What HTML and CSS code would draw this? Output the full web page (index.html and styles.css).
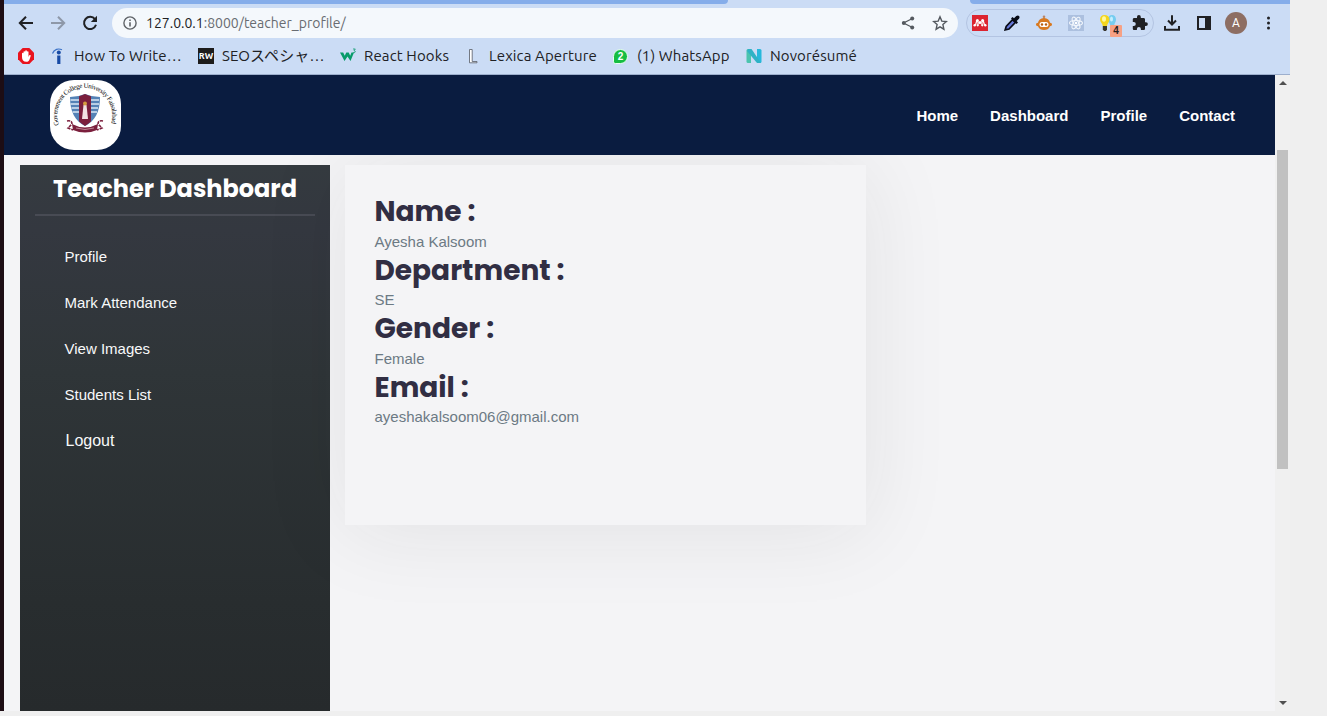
FILE: index.html
```html
<!DOCTYPE html>
<html lang="en">
<head>
<meta charset="utf-8">
<title>Teacher Profile</title>
<link rel="stylesheet" href="styles.css">
</head>
<body>
<div class="window">
  <div class="tabstrip"><div class="tab-left"></div><div class="tab-right"></div></div>
  <div class="toolbar">
    <div class="nav-buttons">
      <svg class="ic" viewBox="0 0 16 16"><path d="M15 8H2.500M8 1.800 1.800 8 8 14.200" fill="none" stroke="#202124" stroke-width="2"/></svg>
      <svg class="ic" viewBox="0 0 16 16"><path d="M1 8h12.500M8 1.800 14.200 8 8 14.200" fill="none" stroke="#8e98a8" stroke-width="2"/></svg>
      <svg class="ic" viewBox="0 0 16 16"><path d="M13 4.200A6.100 6.100 0 1 0 14 9.800" fill="none" stroke="#202124" stroke-width="2"/><path d="M15 .8V7H8.800z" fill="#202124"/></svg>
    </div>
    <div class="omnibox">
      <svg class="info" viewBox="0 0 14 14"><circle cx="7" cy="7" r="6.100" fill="none" stroke="#5f6368" stroke-width="1.400"/><path d="M7 6.200v4.200M7 3.400v1.600" stroke="#5f6368" stroke-width="1.600"/></svg>
      <span class="url"><b>127.0.0.1</b>:8000/teacher_profile/</span>
      <svg class="ic share" viewBox="0 0 16 16"><path d="M12.500 3.500 3.500 8l9 4.500" fill="none" stroke="#54595f" stroke-width="1.300"/><g fill="#54595f"><circle cx="12.200" cy="3.500" r="2"/><circle cx="3.800" cy="8" r="2"/><circle cx="12.200" cy="12.500" r="2"/></g></svg>
      <svg class="ic star" viewBox="0 0 16 16"><path d="m8 1.800 1.800 4.300 4.600.4-3.500 3.100 1 4.600L8 11.800l-3.900 2.400 1-4.600L1.600 6.500l4.600-.4z" fill="none" stroke="#54595f" stroke-width="1.400"/></svg>
    </div>
    <div class="extensions">
      <svg class="ic" viewBox="0 0 16 16"><path fill="#dc2430" d="M0 0h16v16H0z"/><g fill="#fff"><circle cx="5.400" cy="5.500" r="1.500"/><circle cx="10.600" cy="5.500" r="1.500"/><circle cx="8" cy="7.500" r="1.500"/><circle cx="2.700" cy="10.300" r="1.200"/><circle cx="5.700" cy="10.300" r="1.100"/><circle cx="10.300" cy="10.300" r="1.100"/><circle cx="13.300" cy="10.300" r="1.200"/></g><path d="M4.700 6 3.500 10M11.300 6l1.200 4M6 6.500v4M10 6.500v4" fill="none" stroke="#fff" stroke-width="1.200"/></svg>
      <svg class="ic" viewBox="0 0 16 16"><path d="m1.200 14.800 1-3.300L8.500 4.700l2.800 2.800L5 14z" fill="#6678d8" stroke="#080b16" stroke-width="1.700"/><path d="m7 3.500 5.500 5.500 1.500-1.500-1.300-1.500L15 3.700C16.500 1.500 14.500-.5 12.300 1L10 3.300 8.500 2z" fill="#080b16"/></svg>
      <svg class="ic" viewBox="0 0 16 16"><circle cx="8" cy="1.800" r="1.300" fill="#b98668"/><path d="M7.300 2h1.400v3H7.300z" fill="#c88e5c"/><path d="M8 3c3.600 0 5.600 2.200 6 4.800 1.200 0 2 .7 2 1.700s-.8 1.700-2 1.700C13 14 10.700 15 8 15s-5-1-6-3.800c-1.200 0-2-.7-2-1.700s.8-1.700 2-1.700C2.400 5.200 4.400 3 8 3z" fill="#d87920"/><rect x="3.500" y="7" width="9" height="5" rx="2.500" fill="#fff"/><circle cx="6" cy="9.500" r="1.200" fill="#b85d10"/><circle cx="10" cy="9.500" r="1.200" fill="#b85d10"/></svg>
      <svg class="ic" viewBox="0 0 16 16"><path fill="#acc0df" d="M0 0h16v16H0z"/><g fill="none" stroke="#f2f6fc" stroke-width="1.100"><ellipse cx="8" cy="8" rx="6.500" ry="2.500"/><ellipse cx="8" cy="8" rx="6.500" ry="2.500" transform="rotate(60 8 8)"/><ellipse cx="8" cy="8" rx="6.500" ry="2.500" transform="rotate(120 8 8)"/></g><circle cx="8" cy="8" r="1.300" fill="#fff"/></svg>
      <span class="bulb">
        <svg class="ic" viewBox="0 0 16 16"><path d="M12 0c2.500 0 4 2 4 4.500S14.500 8 14 11h-3.500C10 8 8 7 8 4.500S9.500 0 12 0z" fill="#76cdf0"/><ellipse cx="11.500" cy="4" rx="1.500" ry="2.500" fill="#c4efff"/><path d="M4.500 0C1.800 0 0 2 0 4.400 0 7 2.500 8 2.800 11H7c.3-3 2.500-4 2.500-6.600C9.500 2 7.500 0 4.500 0z" fill="#f4d51d"/><ellipse cx="4" cy="4" rx="2" ry="2.800" fill="#fff8a0"/><path d="M2.800 11H7v3.500L6 16H4l-1.200-1.500z" fill="#38362f"/></svg>
        <span class="badge">4</span>
      </span>
      <svg class="ic" viewBox="0 0 16 16"><path d="M14 7.200h-1V4.300c0-.8-.6-1.400-1.400-1.400H8.800V2A1.900 1.900 0 0 0 5 2v.9H2.200C1.400 2.900.8 3.500.8 4.300V7h1a2 2 0 0 1 0 4H.8v2.700c0 .8.600 1.400 1.400 1.400h2.700v-1a2 2 0 0 1 4 0v1h2.700c.8 0 1.400-.6 1.400-1.400v-2.800h1a1.850 1.850 0 0 0 0-3.700z" fill="#202124"/></svg>
    </div>
    <div class="actions">
      <svg class="ic" viewBox="0 0 16 16"><path d="M8 .3v9M4 5.500l4 4 4-4M1 11v3.800h14V11" fill="none" stroke="#202124" stroke-width="2"/></svg>
      <svg class="ic" viewBox="0 0 16 16"><path d="M1 1h14v14H1zm2 2v10h6V3z" fill="#202124" fill-rule="evenodd"/></svg>
      <span class="avatar">A</span>
      <svg class="ic" viewBox="0 0 16 16"><g fill="#202124"><circle cx="8.500" cy="3" r="1.500"/><circle cx="8.500" cy="8" r="1.500"/><circle cx="8.500" cy="13" r="1.500"/></g></svg>
    </div>
  </div>
  <div class="bookmarks">
    <svg class="ic" viewBox="0 0 16 16"><path d="M4.700 0h6.600L16 4.700v6.600L11.300 16H4.700L0 11.300V4.700z" fill="#e9131d"/><path d="M4 9V5.500c0-.9 1.500-.9 1.500 0V3.800c0-.9 1.700-.9 1.700 0V3c0-.9 1.700-.9 1.700 0v.8c0-.9 1.600-.9 1.600 0V9l.7-1.500c.5-.9 1.700-.5 1.500.4l-1.200 3.500C11 13 10 13.800 8.300 13.800 5.500 13.800 4 12 4 9z" fill="#fff"/></svg>
    <div class="bm"><svg class="ic" viewBox="0 0 16 16"><path d="M2.500 5.500C4 1 8.500 .2 12 1.700" fill="none" stroke="#3c72c7" stroke-width="1.200"/><circle cx="8.800" cy="4.600" r="2" fill="#164aa5"/><path d="M7.200 7.500h3.200V16H7.200z" fill="#164aa5"/></svg><span class="t1">How To Write…</span></div>
    <div class="bm"><span class="rw">RW</span><span class="t2">SEOスペシャ…</span></div>
    <div class="bm"><svg class="ic" viewBox="0 0 16 16"><path d="M0 4.500h3.200l1.500 3.200L6.300 4.500h2.400l1.500 3.200 1.300-3.200H14L10.500 13 7.500 8.500 4.500 13z" fill="#079b69"/><path d="M13 1h2.300L14 2.700c2 0 1.700 2.300-.8 2" fill="none" stroke="#079b69" stroke-width=".8"/></svg><span class="t3">React Hooks</span></div>
    <div class="bm"><svg class="ic" viewBox="0 0 16 16"><path d="M4.500 1.500h2.700v12H12v1.300H4.500z" fill="#fff" stroke="#555b65" stroke-width=".8"/></svg><span class="t4">Lexica Aperture</span></div>
    <div class="bm"><span class="wa">2</span><span class="t5">(1) WhatsApp</span></div>
    <div class="bm"><svg class="ic" viewBox="0 0 16 16"><path d="M.5 2.500Q.5 1 2 1h3v14H2q-1.500 0-1.500-1.500z" fill="#4bc4ae"/><path d="M11 1h3q1.500 0 1.500 1.500v11q0 1.500-1.500 1.500h-3z" fill="#26b8dc"/><path d="M2 1h3.500L15 15h-4L1 3z" fill="#2eb2c5"/></svg><span class="t6">Novorésumé</span></div>
  </div>
  <div class="viewport">
    <div class="page">
      <header class="site-header">
        <svg class="logo" viewBox="0 0 71 70">
          <rect width="71" height="70" rx="24" fill="#fff"/>
          <path id="arc" d="M9 45A27.500 27.500 0 1 1 60.500 45" fill="none"/>
          <text class="logo-text"><textPath href="#arc" textLength="104">Government College University Faisalabad</textPath></text>
          <path d="M20 17q8 0 15-3 7 3 15 3c0 15-5 24-15 29C25 41 20 32 20 17z" fill="#5482b6"/>
          <path d="M20.500 20h9m-9 4h9m-8 4h8m-7 4h7M40 20h9m-9 4h9m-9 4h8m-8 4h7" stroke="#d9e8f5" stroke-width="1.500"/>
          <path d="M29 16.200q3-.6 6-2.200 3 1.600 6 2.200v25.300q-3 2.500-6 4.500-3-2-6-4.500z" fill="#7b1f3d"/>
          <path d="m33.500 25 1.500-1 1.500 1 1.500 14h-6z" fill="#f2e2e3"/><circle cx="35" cy="23.500" r="2" fill="#d69c40"/>
          <path d="M22 44q13 7 26 0l-1 6q-12 5-24 0z" fill="#7b1f3d"/>
          <path d="M17 41q5-1 5 3l-4 4 5 2m30-9q-5-1-5 3l4 4-5 2" fill="none" stroke="#7b1f3d" stroke-width="1.600" stroke-dasharray="3 1"/>
          <path d="M26 48q9 3 18 0" fill="none" stroke="#cfa3ad" stroke-width=".8"/>
        </svg>
        <nav class="menu"><a>Home</a><a>Dashboard</a><a>Profile</a><a>Contact</a></nav>
      </header>
      <main class="content">
        <aside class="sidebar">
          <h2 class="side-title">Teacher Dashboard</h2>
          <ul class="side-nav"><li>Profile</li><li>Mark Attendance</li><li>View Images</li><li>Students List</li><li class="logout">Logout</li></ul>
        </aside>
        <section class="card">
          <h3>Name :</h3><p>Ayesha Kalsoom</p>
          <h3>Department :</h3><p>SE</p>
          <h3>Gender :</h3><p>Female</p>
          <h3>Email :</h3><p>ayeshakalsoom06@gmail.com</p>
        </section>
      </main>
    </div>
    <div class="scrollbar"><span class="up"></span><span class="thumb"></span><span class="down"></span></div>
  </div>
</div>
</body>
</html>
```
FILE: styles.css
```css
* { box-sizing: border-box; }
body { margin: 0; height: 716px; overflow: hidden; background: #efefef; font-family: "Liberation Sans", Arial, sans-serif; }
svg { display: block; flex: none; }
.ic { width: 16px; height: 16px; }
.window { width: 1290px; height: 711px; border-left: 4px solid #1d0d14; background: #cbdcf5; display: flex; flex-direction: column; }
.tabstrip { height: 4px; display: flex; justify-content: space-between; flex: none; }
.tab-left { width: 724px; background: #85adea; border-bottom-right-radius: 5px; }
.tab-right { width: 320px; background: #85adea; border-bottom-left-radius: 5px; }
.toolbar { height: 37px; display: flex; align-items: center; flex: none; }
.nav-buttons { width: 108px; padding-left: 14px; display: flex; gap: 16px; }
.omnibox { width: 846px; height: 30px; border-radius: 15px; background: #f4f8fc; display: flex; align-items: center; padding: 0 10px 0 11px; }
.info { width: 14px; height: 14px; }
.url { font: 14px Ubuntu, "Open Sans", "Noto Sans", sans-serif; color: #686c71; margin-left: 9px; white-space: nowrap; }
.url b { font-weight: 400; color: #202124; }
.share { margin-left: auto; }
.star { margin-left: 16px; }
.extensions { margin-left: 8px; width: 188px; height: 28px; border: 1px solid #b3c4e2; border-radius: 14px; display: flex; align-items: center; gap: 16px; padding-left: 5px; }
.bulb { position: relative; }
.badge { position: absolute; left: 10px; top: 10px; width: 12px; height: 12px; border-radius: 1px; background: #f7a184; color: #25201e; font: 700 10px/12px "Liberation Sans", sans-serif; text-align: center; }
.actions { display: flex; align-items: center; padding-left: 10px; gap: 16px; }
.avatar { width: 22px; height: 22px; margin: 0 -3px; border-radius: 50%; background: #8d6e63; color: #fff; font: 12px/22px Roboto, sans-serif; text-align: center; }
.bookmarks { height: 34px; flex: none; border-bottom: 1px solid #9dafcd; display: flex; align-items: center; gap: 16px; padding: 0 0 3px 14px; font: 15px Ubuntu, "Open Sans", "Noto Sans CJK JP", sans-serif; letter-spacing: .12px; color: #202124; }
.bm { display: flex; align-items: center; gap: 8px; white-space: nowrap; line-height: 20px; }
.t1 { width: 108px; }
.t2 { width: 102px; }
.t3 { width: 85px; }
.t4 { width: 108px; }
.t5 { width: 93px; }
.t6 { width: 87px; }
.rw { width: 16px; height: 16px; background: #1d1c1b; color: #fff; font: 700 9px/16px Ubuntu, "Open Sans", sans-serif; text-align: center; letter-spacing: 0; }
.wa { width: 15px; height: 15px; margin-right: 1px; background: #16bd42; border: 1px solid #e8fff0; border-radius: 50% 50% 50% 15%; color: #fff; font: 700 10px/13px "Liberation Sans", sans-serif; text-align: center; }
.viewport { flex: 1; display: flex; min-height: 0; }
.page { width: 1271px; background: #f4f4f6; display: flex; flex-direction: column; overflow: hidden; }
.site-header { height: 80px; flex: none; position: relative; z-index: 1; background: #0a1c40; display: flex; align-items: center; justify-content: space-between; padding: 0 40px 0 46px; }
.logo { width: 71px; height: 70px; }
.logo-text { font: 6.800px "Liberation Serif", serif; fill: #000; }
.menu { display: flex; gap: 32px; color: #fff; font: 700 15px/18px "Liberation Sans", sans-serif; padding-top: 2px; }
.content { flex: 1; display: flex; align-items: flex-start; gap: 15px; padding: 10px 0 0 16px; }
.sidebar { width: 310px; height: 546px; padding: 0 15px; background: linear-gradient(#353b40 0, #343840 12%, #2f3538 38%, #282d2f 80%, #262a2c); color: #fff; }
.side-title { margin: 0; height: 51px; border-bottom: 2px solid #484b54; font: 700 24px/48px Poppins, Inter, sans-serif; text-align: center; white-space: nowrap; }
.side-nav { list-style: none; margin: 18px 0 0; padding: 0 0 0 29.500px; font-size: 15px; line-height: 46px; color: #f8f9fa; }
.side-nav .logout { font-size: 16px; padding-left: 1px; }
.card { width: 521px; height: 360px; padding: 29px 29.500px; background: #f4f4f6; box-shadow: 0 5px 83px rgba(40, 40, 40, .085); }
.card h3 { margin: 0; font: 700 28px/36px Poppins, Inter, sans-serif; color: #312e43; white-space: nowrap; }
.card p { margin: 0; font-size: 15px; line-height: 22.500px; color: #6c7a84; }
.card p:nth-of-type(odd) { padding-top: 1px; line-height: 21.500px; }
.scrollbar { width: 15px; background: #f0f0f0; display: flex; flex-direction: column; align-items: center; }
.up, .down { border: 4px solid transparent; flex: none; }
.up { border-top: 0; border-bottom-color: #505050; margin-top: 6px; }
.thumb { width: 11px; height: 319px; margin-top: 65px; background: #c1c1c1; }
.down { border-bottom: 0; border-top-color: #505050; margin: auto 0 6px; }
```
